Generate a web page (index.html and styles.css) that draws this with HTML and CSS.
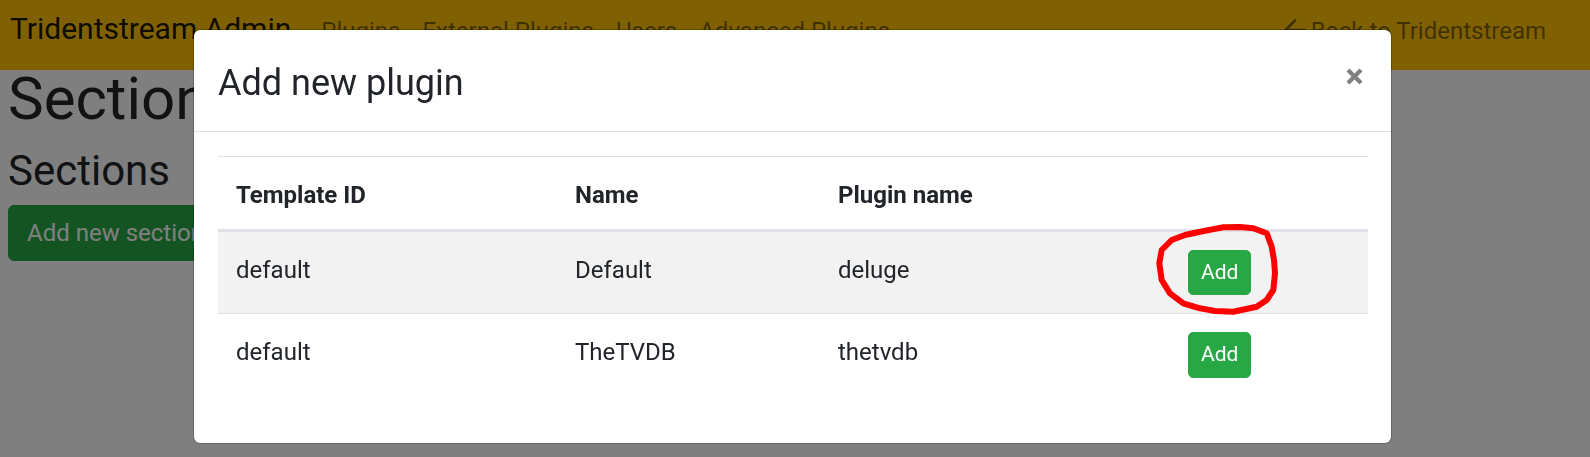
FILE: index.html
```html
<!DOCTYPE html>
<html lang="en">
<head>
<meta charset="utf-8">
<title>Tridentstream Admin</title>
<link rel="stylesheet" href="styles.css">
</head>
<body>
<nav class="navbar">
  <a class="brand" href="#">Tridentstream Admin</a>
  <ul class="nav">
    <li><a class="nav-link" href="#">Plugins</a></li>
    <li><a class="nav-link" href="#">External Plugins</a></li>
    <li><a class="nav-link" href="#">Users</a></li>
    <li><a class="nav-link" href="#">Advanced Plugins</a></li>
  </ul>
  <a class="back-link" href="#"><svg class="back-arrow" viewBox="0 0 24 24" aria-hidden="true"><path d="M22 12H3M12 2.5L2.5 12L12 21.5" fill="none" stroke="currentColor" stroke-width="2.6" stroke-linecap="round" stroke-linejoin="round"/></svg>Back to Tridentstream</a>
</nav>
<main class="content">
  <h1 class="page-title">Sections</h1>
  <h3 class="section-title">Sections</h3>
  <button class="btn-section" type="button">Add new section</button>
</main>
<div class="backdrop"></div>
<div class="modal">
  <div class="modal-header">
    <h4 class="modal-title">Add new plugin</h4>
    <button class="close" type="button" aria-label="Close"><svg viewBox="0 0 17 17" aria-hidden="true"><path d="M2 2L15 15M15 2L2 15" stroke="#808080" stroke-width="4.2" fill="none"/></svg></button>
  </div>
  <div class="modal-body">
    <table class="plugins">
      <colgroup><col class="c-id"><col class="c-name"><col class="c-plugin"><col class="c-action"></colgroup>
      <thead>
        <tr><th>Template ID</th><th>Name</th><th>Plugin name</th><th></th></tr>
      </thead>
      <tbody>
        <tr><td>default</td><td>Default</td><td>deluge</td><td class="action"><button class="btn-add" type="button">Add</button></td></tr>
        <tr><td>default</td><td>TheTVDB</td><td>thetvdb</td><td class="action"><button class="btn-add" type="button">Add</button></td></tr>
      </tbody>
    </table>
  </div>
</div>
<svg class="annotation" viewBox="0 0 135 100" aria-hidden="true"><polygon points="21.7,20 35,15 50,11.7 73.3,7.3 90,7 103.3,8.3 116.7,13.3 121.7,26.7 124,40 125,53.3 123.3,70 116.7,80 106.7,86.7 83.3,91.7 65,91 50,88.3 33.3,83.3 20,73.3 11.7,60 9.3,43.3 11.7,30" fill="none" stroke="#ff0000" stroke-width="6" stroke-linejoin="round"/></svg>
</body>
</html>
```
FILE: styles.css
```css
html, body {
  margin: 0;
  padding: 0;
}
body {
  width: 1590px;
  height: 457px;
  overflow: hidden;
  font-family: Roboto, "Open Sans", "Noto Sans", sans-serif;
  color: #212529;
  background: #fff;
  position: relative;
}
.navbar {
  display: flex;
  align-items: baseline;
  height: 70px;
  box-sizing: border-box;
  padding: 6px 44px 0 10px;
  background: #ffc107;
}
.brand {
  font-size: 30px;
  line-height: 45px;
  color: rgba(0, 0, 0, 0.9);
  text-decoration: none;
  margin-right: 19px;
}
.nav {
  display: flex;
  list-style: none;
  margin: 0;
  padding: 0;
}
.nav-link {
  display: block;
  font-size: 24px;
  line-height: 36px;
  padding: 0 11px;
  color: rgba(0, 0, 0, 0.5);
  text-decoration: none;
}
.back-link {
  margin-left: auto;
  font-size: 24px;
  line-height: 36px;
  color: rgba(0, 0, 0, 0.5);
  text-decoration: none;
}
.back-arrow {
  width: 24px;
  height: 24px;
  vertical-align: -3px;
  margin-right: 4px;
}
.content {
  padding: 0 8px;
}
.page-title {
  font-size: 60px;
  font-weight: 400;
  line-height: 57px;
  margin: 0;
}
.section-title {
  font-size: 42px;
  font-weight: 400;
  line-height: 50px;
  margin: 18.6px 0 9.4px;
}
.btn-section {
  font-family: inherit;
  font-size: 24px;
  line-height: 36px;
  padding: 9px 18px;
  border: 1px solid #28a745;
  border-radius: 6px;
  background: #28a745;
  color: #fff;
}
.backdrop {
  position: fixed;
  inset: 0;
  background: rgba(0, 0, 0, 0.5);
}
.modal {
  position: absolute;
  top: 29px;
  left: 193px;
  width: 1199px;
  box-sizing: border-box;
  background: #fff;
  background-clip: padding-box;
  border: 1px solid rgba(0, 0, 0, 0.2);
  border-radius: 7px;
}
.modal-header {
  display: flex;
  align-items: flex-start;
  padding: 25.6px 24px 21.4px;
  border-bottom: 1px solid #dee2e6;
}
.modal-title {
  font-size: 36px;
  font-weight: 400;
  line-height: 54px;
  margin: 0;
}
.close {
  margin: 12.4px 4px 0 auto;
  padding: 0;
  border: 0;
  background: transparent;
  width: 17px;
  height: 17px;
}
.close svg {
  display: block;
  width: 17px;
  height: 17px;
}
.modal-body {
  padding: 24px;
}
.plugins {
  width: 100%;
  table-layout: fixed;
  border-collapse: collapse;
  margin-bottom: 23px;
  font-size: 24px;
  line-height: 36px;
}
.c-id { width: 339px; }
.c-name { width: 263px; }
.c-plugin { width: 350px; }
.c-action { width: 198px; }
.plugins th,
.plugins td {
  padding: 19.7px 18px 16.3px;
  text-align: left;
  vertical-align: top;
  border-top: 1px solid #dee2e6;
}
.plugins th {
  font-weight: 700;
  vertical-align: bottom;
  border-bottom: 3px solid #dee2e6;
}
.plugins td.action {
  padding: 18px;
}
.plugins tbody tr:nth-child(odd) {
  background: rgba(0, 0, 0, 0.05);
}
.btn-add {
  display: block;
  font-family: inherit;
  font-size: 21px;
  line-height: 31.5px;
  padding: 6px 12px;
  border: 1px solid #28a745;
  border-radius: 5px;
  background: #28a745;
  color: #fff;
}
.annotation {
  position: absolute;
  left: 1150px;
  top: 220px;
  width: 135px;
  height: 100px;
}
```
